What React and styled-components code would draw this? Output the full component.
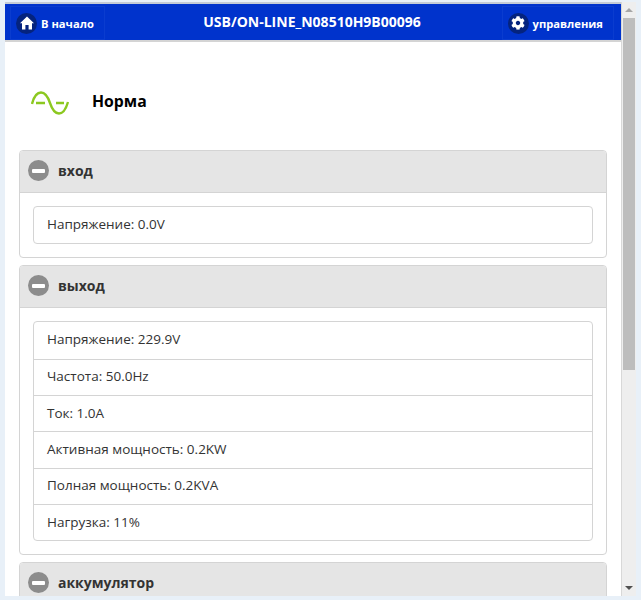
import styled, { createGlobalStyle } from 'styled-components';
import { FaCog } from 'react-icons/fa';

const GlobalStyle = createGlobalStyle`
	html, body {
		margin: 0;
		padding: 0;
		height: 600px;
		overflow: hidden;
		background: #e8f0f8;
	}
	* {
		box-sizing: border-box;
	}
`;

const Frame = styled.div`
	display: flex;
	width: 641px;
	height: 600px;
	padding: 2px 5px 4px 5px;
`;
const Page = styled.div`
	flex: 1;
	min-width: 0;
	overflow: hidden;
	background: #fff;
	font-family: 'Open Sans', 'Noto Sans', sans-serif;
`;
const Scrollbar = styled.div`
	display: flex;
	flex-direction: column;
	align-items: center;
	width: 15px;
	background: #eeeeee;
	border-left: 1px solid #d8d8d8;
`;
const ScrollArrow = styled.div`
	height: 16px;
	display: flex;
	align-items: center;
	justify-content: center;
	&::before {
		content: '';
		border-left: 4px solid transparent;
		border-right: 4px solid transparent;
		${ ( p ) => ( p.$down ? 'border-top: 4px solid #505050;' : 'border-bottom: 4px solid #a6a6a6;' ) }
	}
`;
const ScrollThumb = styled.div`
	width: 12px;
	height: 352px;
	background: #bdbdbd;
`;
const ScrollSpacer = styled.div`
	flex: 1;
`;
const Header = styled.div`
	display: grid;
	grid-template-columns: 1fr auto 1fr;
	align-items: end;
	height: 40px;
	padding: 0 7px 0 5px;
	background: #0033cc;
	border-top: 2px solid #c5ccd6;
	border-bottom: 2px solid #d4d4d4;
`;
const HeaderTitle = styled.h1`
	margin: 0 0 10px;
	font-size: 14px;
	line-height: 17px;
	font-weight: 700;
	color: #fff;
`;
const HeaderButton = styled.div`
	display: flex;
	align-items: center;
	justify-self: ${ ( p ) => ( p.$right ? 'end' : 'start' ) };
	gap: 4px;
	height: 34px;
	padding: 0 10px 0 5px;
	color: #fff;
	font-size: 11.2px;
	font-weight: 700;
	border: 1px solid #0a3ccf;
`;
const IconBadge = styled.span`
	display: flex;
	align-items: center;
	justify-content: center;
	width: 21px;
	height: 21px;
	border-radius: 50%;
	background: #04237e;
	color: #fff;
	font-size: 14px;
`;
const HomeIcon = styled.svg`
	width: 14px;
	height: 14px;
	display: block;
`;
const Status = styled.div`
	display: flex;
	align-items: center;
	gap: 23px;
	height: 108px;
	padding: 10px 0 0 26px;
	font-size: 15.8px;
	font-weight: 700;
	color: #000;
`;
const StatusIcon = styled.svg`
	width: 38px;
	height: 24px;
	margin-top: 4px;
	display: block;
`;
const Content = styled.div`
	display: flex;
	flex-direction: column;
	gap: 7px;
	padding: 0 14px;
`;
const Section = styled.section`
	border: 1px solid #d4d4d4;
	border-radius: 4px;
	background: #fff;
	flex-shrink: 0;
`;
const SectionHead = styled.div`
	display: flex;
	align-items: center;
	gap: 9px;
	height: 42px;
	padding: 0 8px 2px;
	background: #e5e5e5;
	border-bottom: 1px solid #d4d4d4;
	border-radius: 3px 3px 0 0;
	font-size: 14px;
	font-weight: 700;
	color: #333;
`;
const MinusBadge = styled.span`
	display: flex;
	align-items: center;
	justify-content: center;
	width: 21px;
	height: 21px;
	border-radius: 50%;
	background: #8c8c8c;
	&::before {
		content: '';
		width: 13px;
		height: 4px;
		border-radius: 1px;
		background: #fff;
	}
`;
const List = styled.div`
	margin: 13px;
	border: 1px solid #d4d4d4;
	border-radius: 4px;
	background: #fff;
`;
const Row = styled.div`
	display: flex;
	align-items: center;
	height: 36.33px;
	padding: 0 13px 2px;
	font-size: 13.5px;
	color: #333;
	& + & {
		border-top: 1px solid #d4d4d4;
	}
`;

const sections = [
	{ name: 'вход', rows: [ 'Напряжение: 0.0V' ] },
	{
		name: 'выход',
		rows: [
			'Напряжение: 229.9V',
			'Частота: 50.0Hz',
			'Ток: 1.0A',
			'Активная мощность: 0.2KW',
			'Полная мощность: 0.2KVA',
			'Нагрузка: 11%',
		],
	},
	{ name: 'аккумулятор', rows: [] },
];

const App = () => (
	<>
		<GlobalStyle />
		<Frame>
			<Page>
				<Header>
					<HeaderButton>
						<IconBadge>
							<HomeIcon viewBox="0 0 14 14">
								<path d="M7 0.5 L14 7.2 L12 7.2 L12 13.5 L8.6 13.5 L8.6 9 L5.4 9 L5.4 13.5 L2 13.5 L2 7.2 L0 7.2 Z" fill="#fff" />
							</HomeIcon>
						</IconBadge>
						В начало
					</HeaderButton>
					<HeaderTitle>USB/ON-LINE_N08510H9B00096</HeaderTitle>
					<HeaderButton $right>
						<IconBadge><FaCog /></IconBadge>
						управления
					</HeaderButton>
				</Header>
				<Status>
					<StatusIcon viewBox="0 0 38 24">
						<path d="M1 13 C3 5 6 1.5 10 1.5 C14 1.5 17 6 19 12 C21 18 24 22.5 28 22.5 C32 22.5 35 18 37 11" fill="none" stroke="#8cc820" strokeWidth="2.4" />
						<path d="M5 12 H14 M25 12 H33" stroke="#8cc820" strokeWidth="2.4" />
					</StatusIcon>
					Норма
				</Status>
				<Content>
					{ sections.map( ( section ) => (
						<Section key={ section.name }>
							<SectionHead>
								<MinusBadge />
								{ section.name }
							</SectionHead>
							<List>
								{ section.rows.map( ( row ) => <Row key={ row }>{ row }</Row> ) }
							</List>
						</Section>
					) ) }
				</Content>
			</Page>
			<Scrollbar>
				<ScrollArrow />
				<ScrollThumb />
				<ScrollSpacer />
				<ScrollArrow $down />
			</Scrollbar>
		</Frame>
	</>
);

export default App;
